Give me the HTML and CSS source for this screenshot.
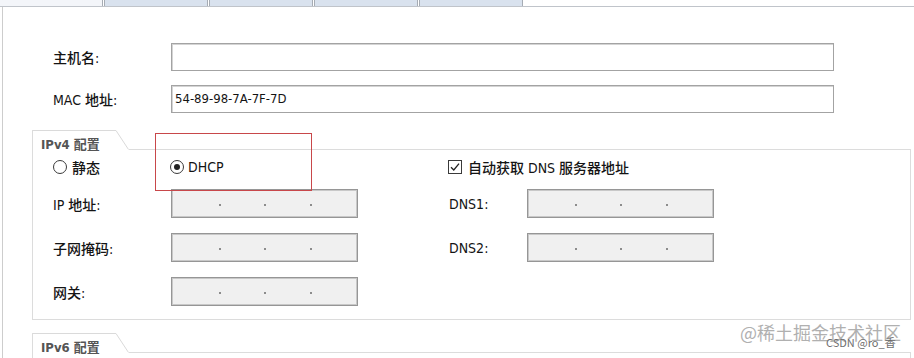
FILE: index.html
```html
<!DOCTYPE html>
<html lang="zh-CN">
<head>
<meta charset="utf-8">
<title>网络配置</title>
<link rel="stylesheet" href="styles.css">
</head>
<body>
<div class="page">
  <div class="tabs">
    <div class="tab tab-active"></div>
    <div class="tab"></div>
    <div class="tab"></div>
    <div class="tab"></div>
    <div class="tab"></div>
  </div>
  <div class="panel">
    <div class="top-form">
      <label class="lbl">主机名:</label>
      <div class="text-input"></div>
      <label class="lbl">MAC 地址:</label>
      <div class="text-input">54-89-98-7A-7F-7D</div>
    </div>

    <section class="group">
      <div class="group-head">
        <div class="group-title">IPv4 配置</div>
        <svg class="slant" width="13" height="20" viewBox="0 0 13 20"><path d="M0 0.5 L12.5 19.5" stroke="#dadada" stroke-width="1" fill="none"/></svg>
        <div class="head-line"></div>
      </div>
      <div class="group-body">
        <div class="cols radio-row">
          <div class="choice"><span class="radio"></span>静态</div>
          <div class="choice choice-dhcp"><span class="radio checked"></span>DHCP</div>
          <div class="choice choice-dns"><span class="checkbox"><svg width="14" height="14" viewBox="0 0 14 14"><path d="M3 7.2 L5.8 10 L11 3.6" stroke="#222" stroke-width="1.3" fill="none"/></svg></span>自动获取 DNS 服务器地址</div>
        </div>
        <div class="cols fields">
          <label class="lbl">IP 地址:</label>
          <div class="ip"><span class="seg"></span><span class="dot"></span><span class="seg"></span><span class="dot"></span><span class="seg"></span><span class="dot"></span><span class="seg"></span></div>
          <span></span>
          <label class="lbl">DNS1:</label>
          <div class="ip"><span class="seg"></span><span class="dot"></span><span class="seg"></span><span class="dot"></span><span class="seg"></span><span class="dot"></span><span class="seg"></span></div>

          <label class="lbl">子网掩码:</label>
          <div class="ip"><span class="seg"></span><span class="dot"></span><span class="seg"></span><span class="dot"></span><span class="seg"></span><span class="dot"></span><span class="seg"></span></div>
          <span></span>
          <label class="lbl">DNS2:</label>
          <div class="ip"><span class="seg"></span><span class="dot"></span><span class="seg"></span><span class="dot"></span><span class="seg"></span><span class="dot"></span><span class="seg"></span></div>

          <label class="lbl">网关:</label>
          <div class="ip"><span class="seg"></span><span class="dot"></span><span class="seg"></span><span class="dot"></span><span class="seg"></span><span class="dot"></span><span class="seg"></span></div>
        </div>
      </div>
    </section>

    <section class="group group-v6">
      <div class="group-head">
        <div class="group-title">IPv6 配置</div>
        <svg class="slant" width="13" height="20" viewBox="0 0 13 20"><path d="M0 0.5 L12.5 19.5" stroke="#dadada" stroke-width="1" fill="none"/></svg>
        <div class="head-line"></div>
      </div>
      <div class="group-body"></div>
    </section>
  </div>

  <div class="annot"></div>
  <div class="watermark">@稀土掘金技术社区<span class="wm-small">CSDN @ro_香</span></div>
</div>
</body>
</html>
```

FILE: styles.css
```css
* { box-sizing: border-box; }

html, body {
  margin: 0;
  padding: 0;
  background: #ffffff;
}

body {
  font-family: "DejaVu Sans Condensed", "Noto Sans CJK SC", sans-serif;
  font-size: 14px;
  color: #141414;
}

.page {
  position: relative;
  width: 914px;
  height: 358px;
  overflow: hidden;
}

/* top tab strip */
.tabs {
  display: flex;
  height: 7px;
  border-bottom: 1px solid #c0c4ca;
  gap: 1px;
}
.tab {
  width: 104px;
  height: 6px;
  background: #d9e2ee;
  border-left: 1px solid #a6acb4;
  border-right: 1px solid #a6acb4;
}
.tab-active {
  margin-left: -1px;
  background: #f3f5f9;
}

/* main panel */
.panel {
  margin-left: 2px;
  border-left: 1px solid #cdcdcd;
  height: 351px;
}

.top-form {
  display: grid;
  grid-template-columns: 118px 663px;
  grid-template-rows: 28px 28px;
  row-gap: 14px;
  align-items: center;
  padding: 36px 0 0 50px;
}

.lbl {
  white-space: nowrap;
  font-weight: 500;
}

.text-input {
  height: 28px;
  border: 1px solid #a3a3a3;
  box-shadow: inset 1px 1px 0 #d4d4d4;
  background: #fff;
  padding: 0 3px;
  line-height: 26px;
  font-size: 13px;
}

/* group boxes */
.group {
  margin: 17px 0 0 29px;
  width: 879px;
  border-left: 1px solid #dcdcdc;
}
.group-v6 {
  margin-top: 13px;
}
.group-head {
  display: flex;
  height: 20px;
}
.group-title {
  width: 83px;
  height: 20px;
  border-top: 1px solid #dadada;
  padding: 3px 0 0 8px;
  font-size: 13px;
  font-weight: bold;
  color: #555555;
  white-space: nowrap;
}
.slant {
  display: block;
  flex: none;
}
.head-line {
  flex: 1;
  border-bottom: 1px solid #dcdcdc;
}
.group-body {
  border-right: 1px solid #dcdcdc;
  border-bottom: 1px solid #dcdcdc;
  padding: 6px 0 13px 20px;
}
.group-v6 .group-body {
  height: 40px;
}

.cols {
  display: grid;
  grid-template-columns: 118px 187px 91px 78px 187px;
  align-items: center;
}

.radio-row {
  height: 22px;
  margin-bottom: 11px;
}
.choice {
  display: flex;
  align-items: center;
  gap: 5px;
  white-space: nowrap;
  font-weight: 500;
}
.choice-dhcp {
  margin-left: -1px;
  gap: 4px;
}
.choice-dns {
  grid-column: 4 / span 2;
  margin-left: -1px;
  gap: 6px;
}
.radio {
  width: 14px;
  height: 14px;
  border: 1px solid #3a3a3a;
  border-radius: 50%;
  background: #fff;
  display: flex;
  align-items: center;
  justify-content: center;
}
.radio.checked::after {
  content: "";
  width: 6px;
  height: 6px;
  border-radius: 50%;
  background: #222;
}
.checkbox {
  width: 14px;
  height: 14px;
  border: 1px solid #3a3a3a;
  background: #fff;
  display: flex;
}
.checkbox svg {
  margin: -1px;
}

.fields {
  grid-template-rows: 29px 29px 29px;
  row-gap: 15px;
}
.ip {
  height: 29px;
  background: #f0f0f0;
  border: 1px solid #969696;
  box-shadow: inset 0 0 0 1px #c8c8c8;
  display: flex;
  align-items: center;
  padding: 0 2px 0 3px;
}
.seg {
  flex: 1;
}
.dot {
  width: 2px;
  height: 2px;
  margin-top: 3px;
  background: #8c8c8c;
}

/* annotation overlay */
.annot {
  position: absolute;
  left: 155px;
  top: 133px;
  width: 157px;
  height: 58px;
  border: 1px solid #c8474a;
}

.watermark {
  position: absolute;
  left: 740px;
  top: 321px;
  font-family: "Noto Sans CJK SC", sans-serif;
  font-size: 18px;
  line-height: 22px;
  color: #b0b0b0;
  white-space: nowrap;
}
.wm-small {
  position: absolute;
  left: 86px;
  top: 14px;
  font-size: 11px;
  line-height: 14px;
  color: #6e6e6e;
}
```
